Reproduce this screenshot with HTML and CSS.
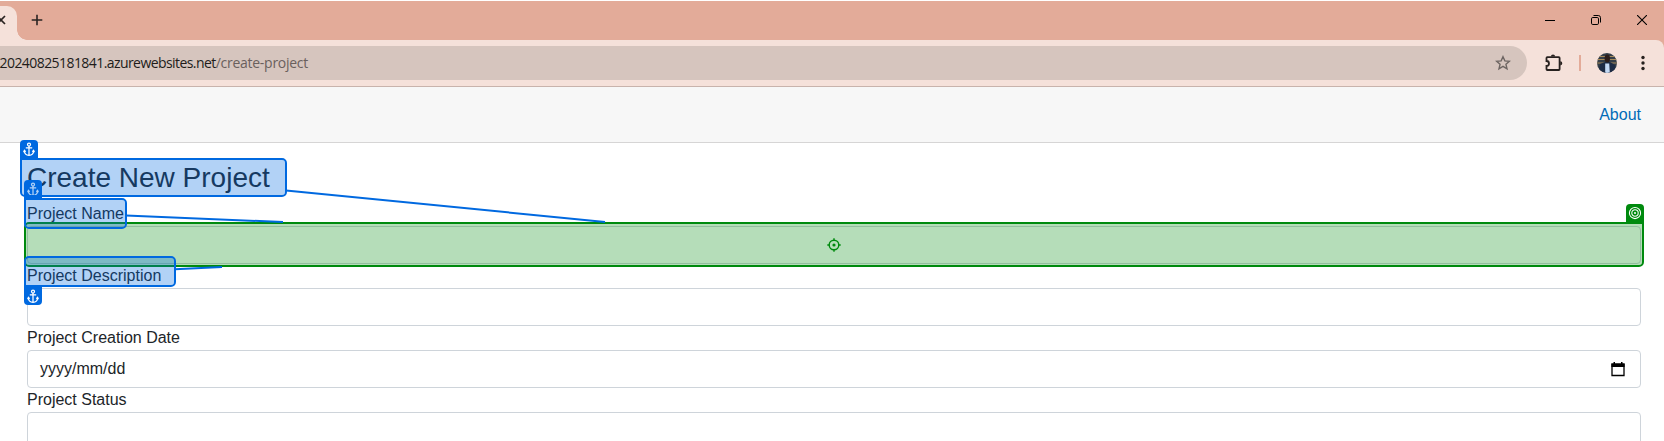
FILE: index.html
```html
<!DOCTYPE html>
<html lang="en">
<head>
<meta charset="utf-8">
<title>Create New Project</title>
<link rel="stylesheet" href="styles.css">
</head>
<body>
<svg width="0" height="0" class="defs">
  <symbol id="anchor" viewBox="0 0 18 19">
    <g fill="none" stroke="currentColor" stroke-width="1.25">
      <circle cx="9" cy="4.6" r="1.5"/>
      <path d="M9 6.1v9.2M5.8 7.900h6.400M4.300 11c.2 2.600 2 4.100 4.700 4.300 2.700-.2 4.500-1.700 4.700-4.300M3.600 12.200l.8-1.800 1.300 1.300M14.400 12.200l-.8-1.800-1.300 1.300"/>
    </g>
  </symbol>
</svg>
<div class="browser">
  <div class="tabstrip">
    <div class="tab"><svg width="6" height="10" viewBox="0 0 6 10"><path d="M-3 1l8 8M5 1l-8 8" stroke="#2a2422" stroke-width="1.7"/></svg></div>
    <div class="tab-foot"></div>
    <svg class="newtab" width="12" height="12" viewBox="0 0 12 12"><path d="M6 .7v10.600M.7 6h10.600" stroke="#2a2422" stroke-width="1.6"/></svg>
    <div class="winctl">
      <svg width="10" height="10" viewBox="0 0 10 10"><path d="M0 5.500h10" stroke="#000"/></svg>
      <svg width="10" height="10" viewBox="0 0 10 10" fill="none" stroke="#000"><rect x=".5" y="2.500" width="7" height="7" rx="1.300"/><path d="M2.500.5H7.300A2.200 2.200 0 0 1 9.500 2.700v4.800"/></svg>
      <svg width="10" height="10" viewBox="0 0 10 10"><path d="M0 0l10 10M10 0L0 10" stroke="#000" stroke-width="1.100"/></svg>
    </div>
  </div>
  <div class="toolbar">
    <div class="omnibox">
      <div class="url">20240825181841.azurewebsites.net<span class="path">/create-project</span></div>
      <svg width="16" height="16" viewBox="0 0 16 16"><path d="M8 1.700l1.850 4.200 4.550.4-3.450 3 1.050 4.500L8 11.400l-4 2.400 1.050-4.500-3.450-3 4.550-.4z" fill="none" stroke="#6d6562" stroke-width="1.400"/></svg>
    </div>
    <svg class="puzzle" width="18" height="18" viewBox="0 0 18 18"><path d="M2.300 3.100h11.500q.8 0 .8.800v11.300q0 .8-.8.800h-11.500q-.8 0-.8-.8v-3.200a2.500 2.500 0 0 0 0-5V3.900q0-.8.800-.8z" fill="none" stroke="#27211f" stroke-width="1.800"/><path d="M5.900 2.600a2.100 2.100 0 0 1 4.200 0zM15.200 7.200a2.100 2.100 0 0 1 0 4.200z" fill="#27211f"/></svg>
    <div class="divider"></div>
    <svg class="avatar" width="20" height="20" viewBox="0 0 20 20">
      <clipPath id="face"><circle cx="10" cy="10" r="10"/></clipPath>
      <g clip-path="url(#face)">
        <path d="M0 0h20v20H0z" fill="#343e48"/>
        <path d="M0 3.500h20M0 6.500h20M0 10h20" stroke="#a58a5c" stroke-width="1.200"/>
        <path d="M1 20l2-9 5-2h5l5 3 1 8z" fill="#1d2c45"/>
        <path d="M8.200 10.500h4l.6 9.500h-4.600z" fill="#c3d9f4"/>
        <ellipse cx="10.300" cy="5.500" rx="2.700" ry="4" fill="#2c1d19"/>
      </g>
    </svg>
    <svg class="menu" width="4" height="16" viewBox="0 0 4 16" fill="#27211f"><circle cx="2" cy="2.500" r="1.700"/><circle cx="2" cy="8" r="1.700"/><circle cx="2" cy="13.500" r="1.700"/></svg>
  </div>
</div>
<header class="top-row"><a class="about">About</a></header>
<main class="content">
  <h1>Create New Project</h1>
  <label>Project Name</label>
  <div class="field"></div>
  <label>Project Description</label>
  <div class="field"></div>
  <label>Project Creation Date</label>
  <div class="field date"><span>yyyy/mm/dd</span>
    <svg width="14" height="15" viewBox="0 0 14 15"><path d="M1 2.200h12v11.300H1z" fill="none" stroke="#000" stroke-width="1.300"/><path d="M.4 1.500h13.200V5H.4zM2.500 0h1.500v2H2.500zM10 0h1.500v2H10z"/></svg>
  </div>
  <label>Project Status</label>
  <div class="field"></div>
</main>
<div class="overlay">
  <div class="target"><svg width="14" height="14" viewBox="0 0 14 14" fill="none" stroke="#008a0e" stroke-width="1.400"><circle cx="7" cy="7" r="4.800"/><circle cx="7" cy="7" r="1.600" fill="#008a0e" stroke="none"/><path d="M7 .3v2.500M7 11.200v2.500M.3 7h2.500M11.200 7h2.500"/></svg></div>
  <div class="badge target-badge"><svg width="18" height="19" viewBox="0 0 18 19" fill="none" stroke="#fff" stroke-width="1.050"><circle cx="9" cy="9" r="5.600"/><circle cx="9" cy="9" r="3.200"/><circle cx="9" cy="9" r="1" fill="#fff" stroke="none"/></svg></div>
  <svg class="links" width="1664" height="441" fill="none" stroke="#0069e0" stroke-width="2"><path d="M286 190.500L605 222M126 215.500L283 222M175 269.300L222 267"/></svg>
  <div class="badge name-badge"><svg width="18" height="19"><use href="#anchor"/></svg></div>
  <div class="box title-box"></div>
  <div class="badge title-badge"><svg width="18" height="19"><use href="#anchor"/></svg></div>
  <div class="box name-box"></div>
  <div class="box desc-box"></div>
  <div class="badge desc-badge"><svg width="18" height="19"><use href="#anchor"/></svg></div>
</div>
</body>
</html>
```
FILE: styles.css
```css
* { box-sizing: border-box; }
body {
  margin: 0;
  height: 441px;
  overflow: hidden;
  position: relative;
  background: #fff;
  color: #212529;
  font: 16px/24px "Liberation Sans", Arial, sans-serif;
}
svg { display: block; flex: none; }
.defs { position: absolute; }
.browser { background: #e3ab99; border-top: 1px solid #fff; }
.tabstrip {
  height: 39px;
  display: flex;
  align-items: flex-end;
}
.tab {
  width: 17px;
  height: 34px;
  background: #f5e1da;
  border-top-right-radius: 10px;
  padding-top: 9px;
}
.tab-foot {
  width: 10px;
  height: 10px;
  background: radial-gradient(circle at 100% 0, #e3ab99 9.500px, #f5e1da 10px);
}
.newtab { margin: 0 0 14px 4px; }
.winctl { display: flex; gap: 36px; margin: 0 17px 15px auto; }
.toolbar {
  height: 47px;
  background: #f5e1da;
  box-shadow: inset 0 -1px #c8b3ac;
  padding-bottom: 1px;
  border-top-right-radius: 8px;
  display: flex;
  align-items: center;
}
.omnibox {
  width: 1527px;
  height: 34px;
  background: #d6c5be;
  border-radius: 0 17px 17px 0;
  display: flex;
  align-items: center;
  justify-content: space-between;
  padding-right: 16px;
}
.url {
  width: 308px;
  display: flex;
  justify-content: flex-end;
  white-space: nowrap;
  font: 14px/20px "Open Sans", sans-serif;
  letter-spacing: -0.570px;
  color: #211c1a;
}
.path { color: #6a605d; letter-spacing: -0.270px; }
.puzzle { margin-left: 18px; }
.divider { width: 2px; height: 16px; background: #e3ab99; margin-left: 16px; }
.avatar { margin-left: 16px; }
.menu { margin-left: 24px; }
.top-row {
  height: 56px;
  background: #f7f7f7;
  border-bottom: 1px solid #d6d5d5;
  display: flex;
  align-items: center;
  justify-content: flex-end;
  padding-right: 23px;
}
.about { color: #006bb7; }
.content { padding: 17.600px 23px 0 27px; }
h1 { margin: 0 0 8px; font-size: 28px; line-height: 33.600px; font-weight: 400; }
label { display: block; height: 24px; }
.field {
  height: 38px;
  border: 1px solid #ced4da;
  border-radius: 4px;
  display: flex;
  align-items: center;
}
.date { justify-content: space-between; padding: 0 15px 0 12px; }
/* Annotation layer lying over the form */
.overlay, .links { position: absolute; inset: 0; }
.box {
  position: absolute;
  border: 2px solid #0069e0;
  border-radius: 5px;
  background: rgba(0, 105, 224, .3);
  background-clip: padding-box;
}
.badge {
  position: absolute;
  width: 18px;
  height: 19px;
  background: #0069e0;
  color: #fff;
  border-radius: 4px 4px 0 0;
}
.title-box { left: 20px; top: 158px; width: 267px; height: 39px; border-top-left-radius: 0; }
.title-badge { left: 20px; top: 140px; }
.name-box { left: 24px; top: 198px; width: 103px; height: 31px; border-top-left-radius: 0; }
.name-badge { left: 24px; top: 180px; }
.desc-box { left: 24px; top: 256px; width: 152px; height: 31px; border-bottom-left-radius: 0; }
.desc-badge { left: 24px; top: 286px; border-radius: 0 0 4px 4px; padding-top: 1px; }
.target {
  position: absolute;
  left: 24px;
  top: 222px;
  width: 1620px;
  height: 45px;
  border: 2px solid #008a0e;
  border-radius: 5px 0 5px 5px;
  background: rgba(0, 138, 14, .29);
  background-clip: padding-box;
  display: flex;
  align-items: center;
  justify-content: center;
}
.target-badge { left: 1626px; top: 204px; background: #008a0e; }
```
